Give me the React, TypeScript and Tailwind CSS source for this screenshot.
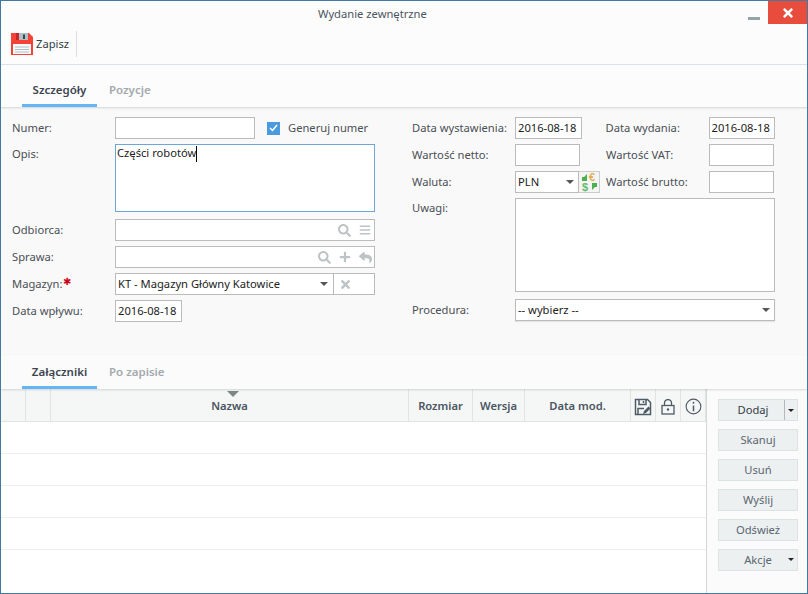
import { FaSearch, FaBars, FaPlus, FaReply, FaTimes } from "react-icons/fa";

const inputBox = "h-[22px] whitespace-nowrap border border-[#bbbbbb] bg-white px-[2px] text-[11.2px] leading-[20px] text-[#222222]";
const buttonBox = "flex h-[22px] w-[80px] items-center justify-center border border-[#dde3e3] bg-[#ecf0f1] text-[11.2px] text-[#5a6670]";

function Label({ children, className = "w-[103px]" }: { children: React.ReactNode; className?: string }) {
  return <span className={`shrink-0 whitespace-nowrap text-[11.2px] text-[#4a4f55] ${className}`}>{children}</span>;
}

function Caret() {
  return <span className="h-0 w-0 border-x-[4px] border-t-[4px] border-x-transparent border-t-[#555555]" />;
}

function SmallCaret({ className = "" }: { className?: string }) {
  return <span className={`h-0 w-0 border-x-[3px] border-t-[3px] border-x-transparent border-t-[#222222] ${className}`} />;
}

function Tabs({ active, other }: { active: string; other: string }) {
  return (
    <div className="flex items-end pl-[21px] text-[11.5px] font-semibold leading-[16px]">
      <div className="w-[75px] border-b-[3px] border-[#64b5f6] pb-[6px] text-center text-[#3c4650]">{active}</div>
      <div className="px-[12px] pb-[9px] text-[#a3a9ad]">{other}</div>
    </div>
  );
}

function BigFloppy() {
  return (
    <svg width="24" height="24" viewBox="0 0 24 24">
      <path d="M1 1h18l4 4v18H1z" fill="#f44336" />
      <rect x="6" y="1" width="12" height="7" fill="#b0bec5" />
      <rect x="6" y="1" width="3" height="7" fill="#c62828" />
      <rect x="13" y="2.500" width="2" height="4.500" fill="#37474f" />
      <rect x="3" y="12" width="18" height="10" fill="#fafafa" />
      <path d="M5 15h14M5 17.500h14M5 20h14" stroke="#b0bec5" strokeWidth="1" />
    </svg>
  );
}

function SaveEditIcon() {
  return (
    <svg width="18" height="18" viewBox="0 0 18 18" fill="none" stroke="#4f5b66" strokeWidth="1.500">
      <path d="M1.500 1.500h12l3 3v12h-15z" />
      <path d="M5 1.500v5h7v-5M9.500 3v2" />
      <path d="M4 16.500v-6h6" />
      <path d="M9 16l1-3 4.500-4.500 2 2L12 15z" fill="#4f5b66" stroke="none" />
    </svg>
  );
}

function LockIcon() {
  return (
    <svg width="14" height="16" viewBox="0 0 14 16" fill="none" stroke="#4f5b66" strokeWidth="1.300">
      <rect x="1" y="6.500" width="12" height="8.500" />
      <path d="M3.500 6.500V4a3.500 3.500 0 0 1 7 0v2.500" />
      <circle cx="7" cy="10.500" r="1.200" fill="#4f5b66" stroke="none" />
    </svg>
  );
}

function InfoIcon() {
  return (
    <svg width="17" height="17" viewBox="0 0 18 18" fill="none" stroke="#4f5b66" strokeWidth="1.200">
      <circle cx="9" cy="9" r="7.800" />
      <path d="M9 8v6" strokeWidth="1.600" />
      <circle cx="9" cy="5" r="1" fill="#4f5b66" stroke="none" />
    </svg>
  );
}

function CurrencyIcon() {
  return (
    <svg width="17" height="20" viewBox="0 0 17 20">
      <path d="M1 9V5h2l3-3v7z" fill="#4caf50" />
      <text x="8" y="9" fontSize="11" fontWeight="700" fill="#e0b050" fontFamily="Liberation Sans">€</text>
      <text x="1" y="19" fontSize="11" fontWeight="700" fill="#66bb6a" fontFamily="Liberation Sans">$</text>
      <path d="M16 11v4h-2l-3 3v-7z" fill="#4caf50" />
    </svg>
  );
}

const headers = [
  { w: "w-[25px]" },
  { w: "w-[25px]" },
  { w: "flex-1", text: "Nazwa" },
  { w: "w-[64px]", text: "Rozmiar" },
  { w: "w-[52px]", text: "Wersja" },
  { w: "w-[106px]", text: "Data mod." },
  { w: "w-[25px]", icon: <SaveEditIcon /> },
  { w: "w-[25px]", icon: <LockIcon /> },
  { w: "w-[25px]", icon: <InfoIcon /> },
];

export default function App() {
  return (
    <div className="flex h-[594px] w-[808px] flex-col overflow-hidden border border-[#41799f] bg-[#fcfcfc] font-['Noto_Sans',sans-serif]">
      {/* Title */}
      <div className="flex h-[23px] shrink-0 items-start justify-between">
        <div className="pl-[317px] pt-[5px] text-[11.2px] text-[#4a5560]">Wydanie zewnętrzne</div>
        <div className="flex items-start">
          <div className="mr-[8px] mt-[16px] h-[3px] w-[12px] bg-[#95a5a6]" />
          <div className="flex h-[23px] w-[39px] items-center justify-center bg-[#e74c3c] text-white">
            <FaTimes size={14} />
          </div>
        </div>
      </div>

      {/* Toolbar */}
      <div className="flex h-[41px] shrink-0 items-center border-b border-[#dfe4e8] pl-[9px]">
        <BigFloppy />
        <span className="ml-[2px] text-[11.2px] text-[#333c44]">Zapisz</span>
        <div className="ml-[7px] h-[26px] w-px bg-[#dddddd]" />
      </div>

      <div className="relative z-10 shrink-0 pt-[17px] shadow-[0_1px_2px_rgba(0,0,0,0.15)]">
        <Tabs active="Szczegóły" other="Pozycje" />
      </div>

      {/* Form */}
      <div className="flex h-[248px] shrink-0 bg-[#f9f9f9] pl-[11px] pt-[10px]">
        <div className="flex w-[363px] flex-col gap-[5px]">
          <div className="flex items-center">
            <Label>Numer:</Label>
            <div className={`${inputBox} w-[140px]`} />
            <div className="ml-[12px] flex h-[13px] w-[13px] items-center justify-center bg-[#4a9ae0]">
              <svg width="9" height="8" viewBox="0 0 9 8" fill="none" stroke="#ffffff" strokeWidth="1.500">
                <path d="M1 4l2.500 2.500L8 1" />
              </svg>
            </div>
            <span className="ml-[8px] text-[11.2px] text-[#4a4f55]">Generuj numer</span>
          </div>
          <div className="flex items-start">
            <Label className="w-[103px] pt-[2px]">Opis:</Label>
            <div className="h-[68px] w-[260px] border border-[#6ea6d6] bg-white px-[1px] text-[11.2px] leading-[16px] text-[#222222]">
              Części robotów<span className="inline-block h-[16px] w-px translate-y-[1px] bg-black align-top" />
            </div>
          </div>
          <div className="mt-[2px] flex items-center">
            <Label>Odbiorca:</Label>
            <div className={`${inputBox} flex w-[260px] items-center justify-end gap-[8px] pr-[3px] text-[#bdc3c7]`}>
              <FaSearch size={13} />
              <FaBars size={12} />
            </div>
          </div>
          <div className="flex items-center">
            <Label>Sprawa:</Label>
            <div className={`${inputBox} flex w-[260px] items-center justify-end gap-[8px] pr-[2px] text-[#bdc3c7]`}>
              <FaSearch size={13} />
              <FaPlus size={12} />
              <FaReply size={13} />
            </div>
          </div>
          <div className="flex items-center">
            <Label>
              Magazyn:<span className="relative -top-[3px] ml-[1px] text-[10px] leading-none text-[#d0021b]">✱</span>
            </Label>
            <div className={`${inputBox} flex w-[219px] items-center justify-between pr-[5px]`}>
              <span>KT - Magazyn Główny Katowice</span>
              <Caret />
            </div>
            <div className="flex h-[22px] w-[41px] items-center border border-l-0 border-[#bbbbbb] bg-white pl-[5px] text-[#bdc3c7]">
              <FaTimes size={13} />
            </div>
          </div>
          <div className="flex items-center">
            <Label>Data wpływu:</Label>
            <div className={`${inputBox} w-[67px]`}>2016-08-18</div>
          </div>
        </div>

        <div className="ml-[37px] flex w-[363px] flex-col gap-[5px]">
          <div className="flex items-center">
            <Label>Data wystawienia:</Label>
            <div className={`${inputBox} w-[67px]`}>2016-08-18</div>
            <Label className="ml-[24px] w-[103px]">Data wydania:</Label>
            <div className={`${inputBox} w-[67px]`}>2016-08-18</div>
          </div>
          <div className="flex items-center">
            <Label>Wartość netto:</Label>
            <div className={`${inputBox} w-[65px]`} />
            <Label className="ml-[26px] w-[103px]">Wartość VAT:</Label>
            <div className={`${inputBox} w-[65px]`} />
          </div>
          <div className="flex items-center">
            <Label>Waluta:</Label>
            <div className={`${inputBox} flex w-[64px] items-center justify-between pr-[4px]`}>
              <span>PLN</span>
              <Caret />
            </div>
            <div className="flex h-[22px] w-[21px] items-center justify-center border border-l-0 border-[#cccccc] bg-[#f4f4f4]">
              <CurrencyIcon />
            </div>
            <Label className="ml-[6px] w-[103px]">Wartość brutto:</Label>
            <div className={`${inputBox} w-[65px]`} />
          </div>
          <div className="flex items-start">
            <Label className="w-[103px] pt-[2px]">Uwagi:</Label>
            <div className="h-[94px] w-[260px] border border-[#bbbbbb] bg-white" />
          </div>
          <div className="mt-[2px] flex items-center">
            <Label>Procedura:</Label>
            <div className={`${inputBox} flex w-[260px] items-center justify-between pr-[4px] shadow-[0_1px_1px_rgba(0,0,0,0.08)]`}>
              <span>-- wybierz --</span>
              <Caret />
            </div>
          </div>
        </div>
      </div>

      <div className="relative z-10 h-[34px] shrink-0 bg-[#fbfbfb] pt-[9px] shadow-[0_1px_2px_rgba(0,0,0,0.15)]">
        <Tabs active="Załączniki" other="Po zapisie" />
      </div>

      {/* Attachments */}
      <div className="flex min-h-0 flex-1 bg-white">
        <div className="w-[705px] shrink-0">
          <div className="relative flex h-[33px] border-b-[1px] border-[#e2e4e4] bg-[#f5f7f7] text-[11.2px] font-semibold text-[#4a5560]">
            {headers.map((h, i) => (
              <div key={i} className={`flex items-center justify-center border-r border-[#e2e4e4] pt-[3px] ${h.w}`}>
                {h.text}
                {h.icon}
              </div>
            ))}
            <span className="absolute left-[226px] top-[2px] h-0 w-0 border-x-[6px] border-t-[6px] border-x-transparent border-t-[#7f8688]" />
          </div>
          {[0, 1, 2, 3].map((r) => (
            <div key={r} className="h-[32px] border-b border-[#eeeeee]" />
          ))}
        </div>
        <div className="flex flex-1 flex-col gap-[8px] border-l border-[#d5d8da] bg-[#fbfbfb] pl-[11px] pt-[10px]">
          <div className={`${buttonBox} relative text-[#333c44]`}>
            <span className="pr-[10px]">Dodaj</span>
            <div className="absolute right-0 top-0 flex h-full w-[13px] items-center justify-center border-l border-[#b5b9bb]">
              <SmallCaret />
            </div>
          </div>
          <div className={buttonBox}>Skanuj</div>
          <div className={buttonBox}>Usuń</div>
          <div className={buttonBox}>Wyślij</div>
          <div className={buttonBox}>Odśwież</div>
          <div className={`${buttonBox} relative`}>
            <span>Akcje</span>
            <SmallCaret className="absolute right-[3px] top-[8px]" />
          </div>
        </div>
      </div>
    </div>
  );
}
